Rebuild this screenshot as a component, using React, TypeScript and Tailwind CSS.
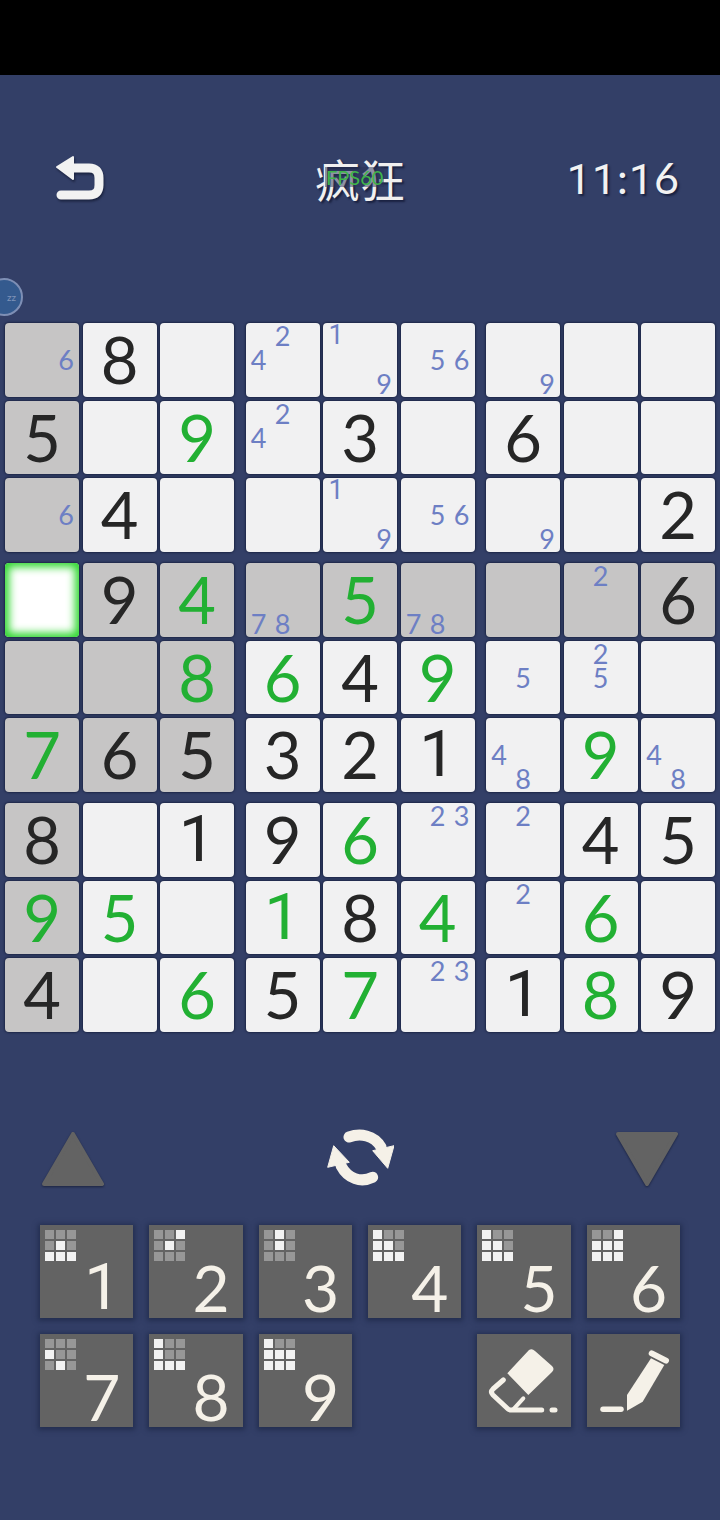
import type { ReactNode } from 'react';

const rows: string[][] = [
  ['h6', 'k8', '', 'h42', 'h19', 'h56', 'h9', '', ''],
  ['k5', '', 'g9', 'h42', 'k3', '', 'k6', '', ''],
  ['h6', 'k4', '', '', 'h19', 'h56', 'h9', '', 'k2'],
  ['s', 'k9', 'g4', 'h78', 'g5', 'h78', '', 'h2', 'k6'],
  ['', '', 'g8', 'g6', 'k4', 'g9', 'h5', 'h25', ''],
  ['g7', 'k6', 'k5', 'k3', 'k2', 'k1', 'h48', 'g9', 'h48'],
  ['k8', '', 'k1', 'k9', 'g6', 'h23', 'h2', 'k4', 'k5'],
  ['g9', 'g5', '', 'g1', 'k8', 'g4', 'h2', 'g6', ''],
  ['k4', '', 'g6', 'k5', 'g7', 'h23', 'k1', 'g8', 'k9'],
];

const fontFor = (d: string | number) => (String(d) === '1' ? "font-['Roboto',sans-serif]" : "font-['Lato',sans-serif]");

function Cell({ r, c }: { r: number; c: number }) {
  const v = rows[r][c];
  const gray = r === 3 || c === 0 || (r >= 3 && r <= 5 && c <= 2);
  if (v === 's') {
    return <div className="rounded-[4px] bg-white shadow-[inset_0_0_8px_4px_#2bd62b,0_0_2px_1px_#1d2747]" />;
  }
  const base = `rounded-[4px] shadow-[0_0_2px_1px_#1d2747] flex items-center justify-center ${gray ? 'bg-[#c6c5c5]' : 'bg-[#f1f1f2]'}`;
  if (v[0] === 'h') {
    const digits = v.slice(1);
    return (
      <div className={base}>
        <div className="grid grid-cols-[24px_24px_24px] grid-rows-[24px_24px_24px] text-[27px] text-[#6d7fc4]">
          {[1, 2, 3, 4, 5, 6, 7, 8, 9].map((n) => (
            <span key={n} className={`flex items-center justify-center leading-none ${fontFor(n)}`}>
              {digits.includes(String(n)) ? n : ''}
            </span>
          ))}
        </div>
      </div>
    );
  }
  return (
    <div className={base}>
      {v && (
        <span className={`text-[65px] leading-none ${fontFor(v[1])} ${v[0] === 'g' ? 'text-[#22b033]' : 'text-[#262626]'}`}>
          {v[1]}
        </span>
      )}
    </div>
  );
}

function Block({ br, bc }: { br: number; bc: number }) {
  const idx = [0, 1, 2];
  return (
    <div className="grid grid-cols-[74px_74px_74px] grid-rows-[73.5px_73.5px_73.5px] gap-x-[3.5px] gap-y-[4px]">
      {idx.map((i) => idx.map((j) => <Cell key={`${i}${j}`} r={br * 3 + i} c={bc * 3 + j} />))}
    </div>
  );
}

const patterns: Record<number, string> = {
  1: '000010111',
  2: '001010000',
  3: '010010000',
  4: '100110111',
  5: '100110111',
  6: '001111111',
  7: '000100010',
  8: '100100111',
  9: '100111111',
};

function NumButton({ n }: { n: number }) {
  return (
    <div className="relative h-[93px] bg-[#636363] shadow-[0_1px_5px_2px_#232e50]">
      <div className="absolute left-[5px] top-[5px] grid grid-cols-[9px_9px_9px] grid-rows-[9px_9px_9px] gap-[2px]">
        {patterns[n].split('').map((p, i) => (
          <div key={i} className={p === '1' ? 'bg-[#f2f2f2]' : 'bg-[#979797]'} />
        ))}
      </div>
      <span className={`absolute right-[13px] bottom-[-2px] text-[64px] leading-none text-[#f5f1e8] ${fontFor(n)}`}>
        {n}
      </span>
    </div>
  );
}

function IconButton({ children, dark }: { children: ReactNode; dark?: boolean }) {
  return <div className={`h-[93px] shadow-[0_1px_5px_2px_#232e50] ${dark ? 'bg-[#5e5e5e]' : 'bg-[#636363]'}`}>{children}</div>;
}

export default function App() {
  return (
    <div className="w-[720px] h-[1520px] bg-[#333f67] flex flex-col overflow-hidden">
      <div className="h-[75px] bg-black shrink-0" />
      <div className="relative h-[248px] shrink-0">
        <div className="grid grid-cols-[1fr_90px_1fr] items-center pt-[80px] px-[40px]">
          <svg className="ml-[15px] drop-shadow-[1px_2px_1px_#1b2340]" width="50" height="46" viewBox="0 0 50 46" fill="none">
            <path d="M2 12 L18 2 L18 24 Z" fill="#f2f2f2" stroke="#f2f2f2" strokeWidth="2" strokeLinejoin="round" />
            <path d="M16 13 L34 13 Q44 13 44 23 L44 30 Q44 40 34 40 L6 40" stroke="#f2f2f2" strokeWidth="9" strokeLinecap="round" />
          </svg>
          <div className="relative w-[90px] text-center text-[45px] leading-none text-[#f0f0f0] [text-shadow:2px_2px_2px_#1a2140] font-['Noto_Sans_CJK_SC',sans-serif]">
            疯狂
            <span className="absolute left-[10px] top-[11px] text-[20px] leading-none px-[1px] bg-[#2a3358]/50 text-[#3fb54a] [text-shadow:none] font-['Lato',sans-serif]">
              FPS60
            </span>
          </div>
          <div className="text-right text-[43px] leading-none tracking-[1px] text-[#f2f2f2] [text-shadow:2px_2px_2px_#1a2140] font-['Lato',sans-serif]">
            <span className="font-['Roboto',sans-serif]">11</span>:<span className="font-['Roboto',sans-serif]">1</span>6
          </div>
        </div>
        <div className="absolute left-[-15px] top-[203px] w-[38px] h-[38px] rounded-full bg-[#345a8e] border-2 border-[#7e8fb5] flex items-center justify-end pr-[5px] text-[10px] text-[#7f93b8] font-['Lato',sans-serif]">
          zz
        </div>
      </div>
      <div className="pl-[5px] grid grid-cols-[229px_229px_229px] gap-x-[11.5px] gap-y-[11.5px] w-fit shrink-0">
        {[0, 1, 2].map((br) => [0, 1, 2].map((bc) => <Block key={`${br}${bc}`} br={br} bc={bc} />))}
      </div>
      <div className="flex items-center justify-between px-[41px] mt-[97px] h-[60px] shrink-0">
        <svg className="drop-shadow-[0_1px_1px_#1b2340]" width="64" height="56" viewBox="0 0 64 56">
          <path d="M32 3 L61 53 L3 53 Z" fill="#636363" stroke="#636363" strokeWidth="4" strokeLinejoin="round" />
        </svg>
        <svg width="68" height="60" viewBox="-2 0 68 60" fill="none">
          <path d="M21 8 C32 4 46 6 53 18" stroke="#f5f1e8" strokeWidth="11" strokeLinecap="round" />
          <path d="M44.7 21.7 L66 16.7 L59.7 39.3 Z" fill="#f5f1e8" stroke="#f5f1e8" strokeWidth="1" strokeLinejoin="round" />
          <path d="M44.7 48.3 C33 54 20 50 13 36.7" stroke="#f5f1e8" strokeWidth="11" strokeLinecap="round" />
          <path d="M5.7 16.7 L21.3 33.3 L-0.3 38.3 Z" fill="#f5f1e8" stroke="#f5f1e8" strokeWidth="1" strokeLinejoin="round" />
        </svg>
        <svg className="drop-shadow-[0_1px_1px_#1b2340]" width="64" height="56" viewBox="0 0 64 56">
          <path d="M32 53 L61 3 L3 3 Z" fill="#636363" stroke="#636363" strokeWidth="4" strokeLinejoin="round" />
        </svg>
      </div>
      <div className="grid grid-cols-6 gap-x-[16px] gap-y-[16px] w-[640px] ml-[40px] mt-[36px] shrink-0">
        {[1, 2, 3, 4, 5, 6, 7, 8, 9].map((n) => <NumButton key={n} n={n} />)}
        <div />
        <IconButton>
          <svg width="93" height="93" viewBox="0 0 93 93" fill="none">
            <path d="M30.3 39.3 L52 16 Q55 14 58 17 L75 32 Q78 35 75 38 L51.3 61 Z" fill="#f5f1e8" />
            <path d="M26.3 46 L16 55 Q13 58 16 61 L31 75 Q32 76 35 76 L64.7 76" stroke="#f5f1e8" strokeWidth="5" strokeLinecap="round" strokeLinejoin="round" />
            <path d="M46.3 64.3 L36.3 75.3" stroke="#f5f1e8" strokeWidth="4" strokeLinecap="round" />
            <path d="M75 76 L78 76" stroke="#f5f1e8" strokeWidth="5" strokeLinecap="round" />
          </svg>
        </IconButton>
        <IconButton dark>
          <svg width="93" height="93" viewBox="0 0 93 93" fill="none">
            <path d="M64 24.3 L77.3 31 L55.7 67.7 L40 76.7 L40 61 Z" fill="#f5f1e8" />
            <path d="M64.7 19.3 L79 26.7" stroke="#f5f1e8" strokeWidth="6" strokeLinecap="round" />
            <path d="M16 75.3 L34 75.3" stroke="#f5f1e8" strokeWidth="5.5" strokeLinecap="round" />
          </svg>
        </IconButton>
      </div>
    </div>
  );
}
